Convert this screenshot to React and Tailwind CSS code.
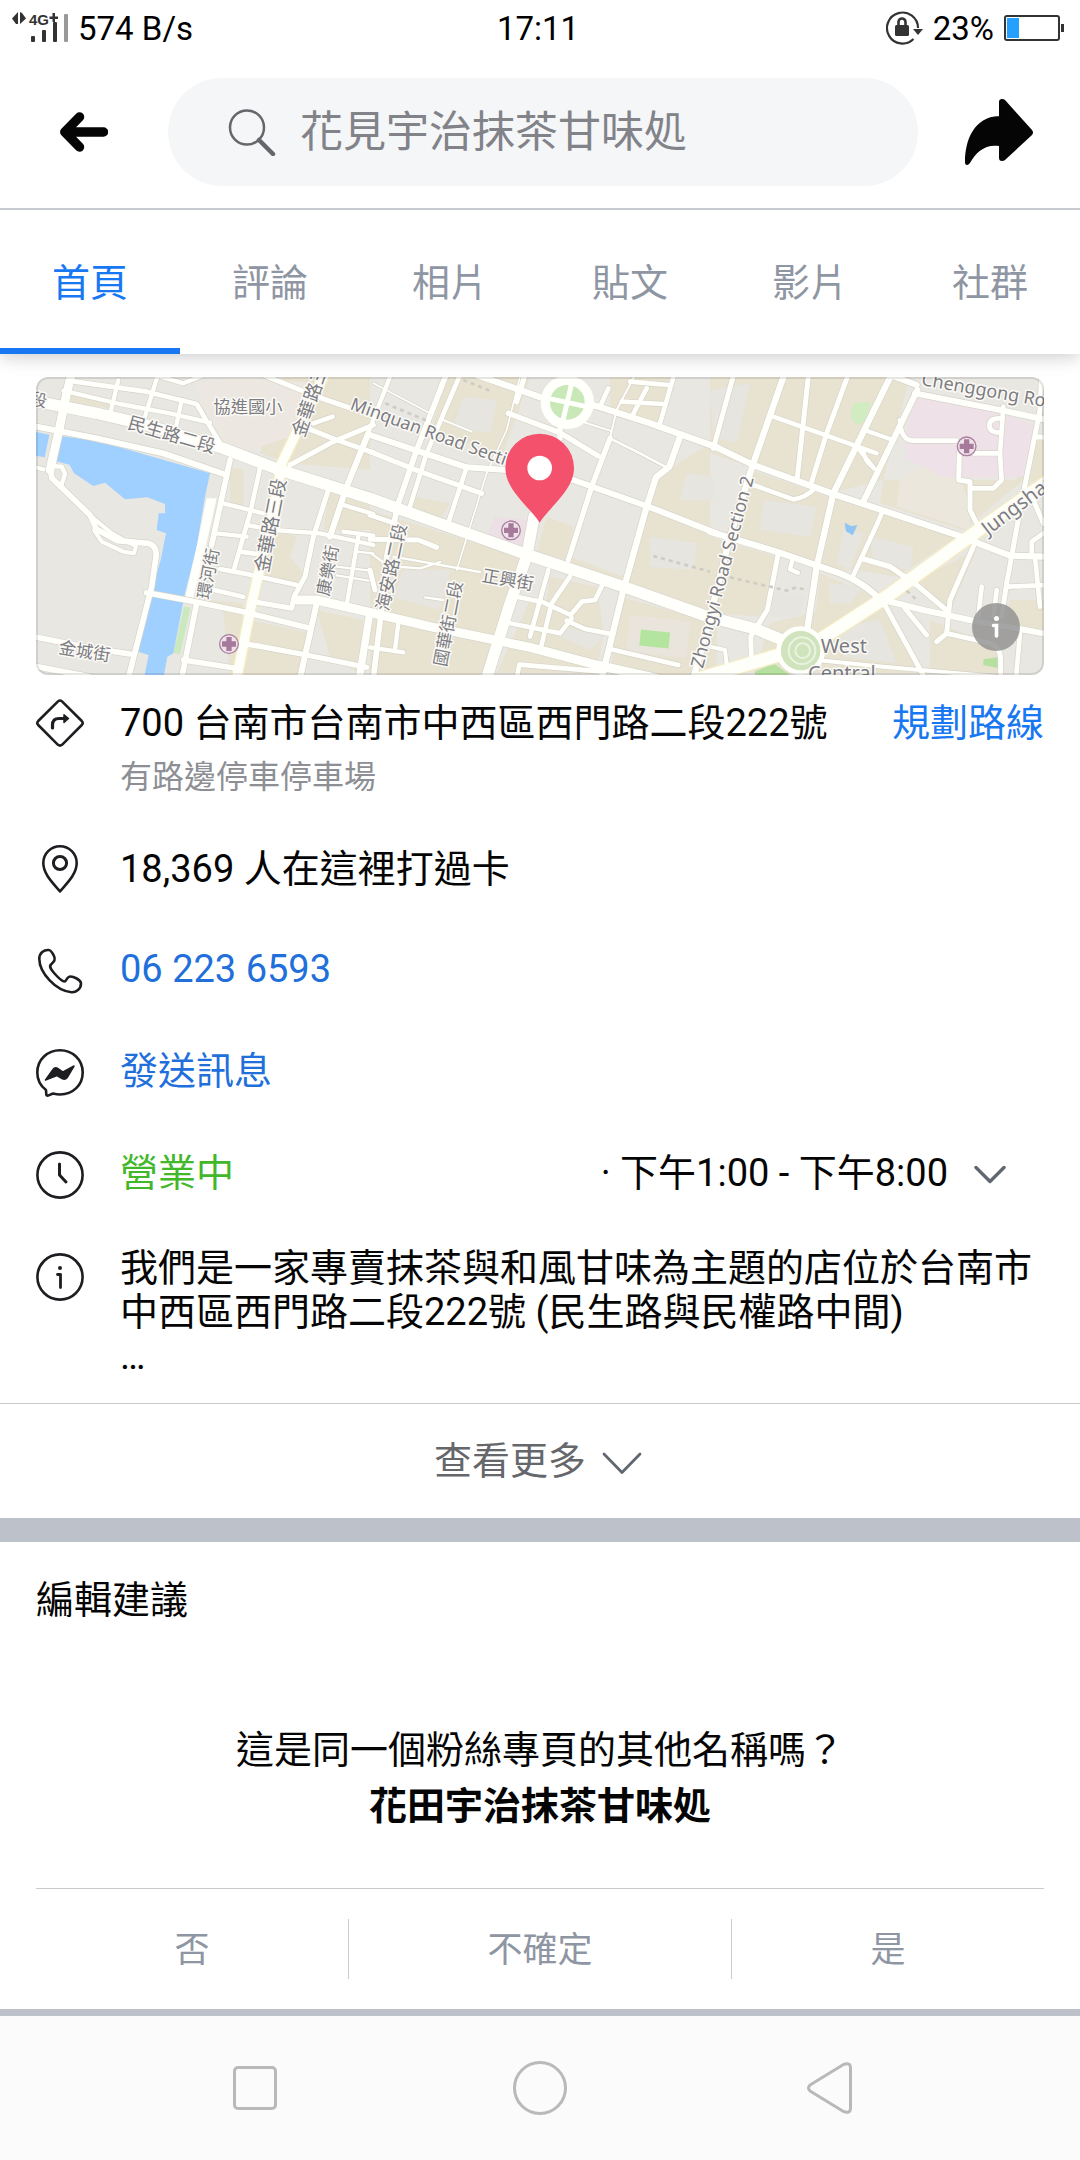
// App.jsx
const TABS = ["首頁", "評論", "相片", "貼文", "影片", "社群"];

// [path, stroke width] in the units of the map drawing
const ROADS = [
  // west side, along the canal
  ["M125 10L110 70L85 190L60 300", 26],
  ["M60 295L66 325L180 435L200 478L262 512L355 520Q382 528 378 560L365 650L295 925", 17],
  ["M185 440L245 490L285 512L318 528L312 550L280 545L215 515L192 480", 12],
  ["M10 290L40 298M60 288L95 290L105 312L92 352", 13],
  ["M10 168L200 205L400 250L590 315", 18],
  ["M135 35L350 65L500 102L522 140L580 235", 14],
  ["M100 62L270 102L420 130L540 158", 13],
  ["M385 10L345 140M265 30L242 125M455 90L438 170M385 18L460 40L515 18", 13],
  ["M600 270L545 525M500 700L455 925", 17],
  ["M690 295L660 430L610 605", 14],
  ["M895 360L850 500L825 620L792 680L785 715L680 697", 15],
  ["M1015 190L950 350L900 500M860 700L810 925", 18],
  ["M580 400L700 430M560 490L650 500M650 465L730 480L870 490L1030 525", 13],
  ["M630 545L680 552M570 597L640 610L800 645M530 655L640 680", 14],
  ["M350 668L480 692L640 725L840 775", 17],
  ["M640 820L830 855L1010 892M460 870L620 895", 16],
  ["M10 800L170 832L300 852M10 888L180 920", 17],
  ["M780 285L910 215L1030 165M840 178L920 210L1030 248M700 15L860 80L955 112", 15],
  ["M850 160L908 140", 14],
  ["M940 405L1030 432M940 485L1030 497M985 500L950 705", 13],
  ["M920 590L1020 602M920 616L1015 632M980 545L1030 550", 7],
  ["M1020 725L988 925", 22],
  // centre
  ["M1084 10L1010 200", 13],
  ["M1250 10L1160 240L1105 400L1070 560L1052 740L1030 925", 17],
  ["M1292 10L1190 250L1135 425", 14],
  ["M1020 195L1160 242L1310 292L1430 300L1630 330L1850 408L2060 490", 18],
  ["M1020 245L1170 305L1355 370", 15],
  ["M1340 15L1540 85L1700 108L1860 160L2060 232", 19],
  ["M1435 130L1590 188L1705 258M1485 15L1460 95M1590 150L1590 205", 16],
  ["M1815 15L1760 120L1740 205M1640 150L1740 182M1240 150L1325 185", 6],
  ["M1470 20L1430 180L1370 310L1280 600M1030 40L1200 130", 5],
  ["M1740 205L1685 350L1615 570", 16],
  ["M1950 200L1918 290L1878 322L1850 410L1780 660L1715 925", 19],
  ["M1932 15L1890 160M1800 35L1915 45M1775 95L1900 102M1850 55L1808 135M1735 55L1710 110", 14],
  ["M1740 205L1820 245L1905 290", 8],
  ["M1310 292L1255 458", 14],
  ["M1512 440L1490 560L1440 700L1370 925", 34],
  ["M1020 435L1100 462M1020 508L1165 510L1220 532M1020 600L1035 660", 15],
  ["M1020 548L1075 588L1170 595L1230 576M1090 560L1350 606M1185 682L1240 690", 7],
  ["M1555 600L1500 800M1620 620L1565 700L1532 835", 14],
  ["M1460 680L1540 697L1622 735L1655 695L1695 690L1715 650M1440 760L1590 790L1625 745M1610 752L1665 777L1735 790", 14],
  ["M1740 837L1945 885M1460 925L1468 884L1720 905", 14],
  ["M1020 832L1120 847M1105 760L1095 840", 13],
  // east side
  ["M2112 10L2050 235", 15],
  ["M2264 10L2170 280L2100 500L2030 780L1990 925", 19],
  ["M2336 10L2302 322M2456 10L2390 190L2345 335", 15],
  ["M2586 10L2410 370L2360 590L2330 790", 19],
  ["M2662 60L2500 395", 18],
  ["M2060 232L2170 285L2410 372L2780 495L2940 557L3050 560", 19],
  ["M2230 140L2540 250M2510 182L2580 207M2485 235L2532 295M2500 240Q2500 270 2532 295", 13],
  ["M2580 15L2660 45M2655 70L2920 122L3050 150", 18],
  ["M2920 110L2910 250L2915 330L2890 355L2820 355", 14],
  ["M2610 150Q2612 212 2650 212L2780 212M2830 250L2910 250M2910 145Q2878 145 2878 166Q2878 188 2910 188", 14],
  ["M2788 250L2786 330L2820 335L2820 420L2845 470", 15],
  ["M3035 10L3030 120L2970 420L2930 640L2915 740M3020 200L3050 202M3010 390L3040 460", 15],
  ["M2170 345L2290 388Q2325 385 2358 352", 14],
  ["M2040 485L2240 545L2400 600Q2500 630 2560 700", 19],
  ["M2555 430L2540 465L2468 620", 14],
  ["M2495 565L2580 590L2660 645L2755 725", 16],
  ["M2560 690L2680 720L2820 750L3050 792", 18],
  ["M2830 530L2760 690L2750 790L2720 815M2750 790L2860 815Q2912 820 2912 870L2912 925", 15],
  ["M2562 700L2685 925M2625 715L2690 795", 15],
  ["M2245 550L2212 720L2162 800L2165 890", 15],
  ["M2290 560L2280 598L2304 608", 13],
  ["M2970 790L2958 925M3015 560L3030 710M2935 650L3050 645M3005 560L3005 515L3040 490M2855 650L2845 740M2900 660L2890 740", 14],
  ["M2040 830L2085 840L2095 925M2360 870L2560 890L2900 920", 12],
  // main roads
  ["M10 92L200 130L350 165L580 235L750 300L1020 385L1200 450L1480 550L1780 650L2040 742L2180 778L2270 815", 34],
  ["M800 690L860 690L1020 727L1200 770L1500 832L1700 885L1880 925", 27],
];

const YELLOW_ROADS = [
  ["M885 10L755 280L735 400L665 700L620 925", 28],
  ["M3060 330L2860 470L2570 680L2330 835L2230 860L2010 925", 38],
];

const BEIGE = [
  "M760 21H1020V300L780 280L690 250Z",
  "M120 65L230 90L240 115L125 95ZM600 400L640 420L640 300L600 290Z",
  "M740 480L800 500L780 560L820 610L800 640L690 620ZM900 360L1020 390V480L880 480Z",
  "M540 690L640 700L620 910H600L580 730ZM660 750L840 790L820 915H640ZM860 720L1000 750L985 910L900 860Z",
  "M1250 21H1500L1420 250L1200 190ZM1150 380L1260 400L1230 450L1150 430ZM1020 420L1500 570L1380 915H1020Z",
  "M1550 440L1630 470L1610 570L1520 550ZM1740 21H1930L1890 160L1740 120ZM1620 560L1780 620L1770 660L1640 620ZM1560 620L1700 650L1720 780L1540 760Z",
  "M1500 690L1720 790L1700 910H1400ZM1880 320L2040 220L2040 720L1790 650ZM1770 680L2060 760V915H1740Z",
  "M2040 21H2640L2560 330L2400 370L2040 250ZM2160 300L2400 380L2360 590L2120 510Z",
  "M2420 380L2780 500L2600 620L2480 600L2370 600ZM2040 500L2240 560L2200 740L2040 730Z",
  "M2560 330H2980L2800 480L2550 400ZM2220 760L2460 700L2560 700L2680 910H2170ZM2370 610L2540 680L2350 800Z",
  "M2640 640L2840 540L2760 720ZM2700 750L2900 830V910H2700ZM2960 330L3042 340V200H2980ZM2940 690H3042V780H2930Z",
];

const GREY = [
  "M1300 80L1400 90L1380 190L1270 170ZM1120 600L1260 600L1230 720L1090 680Z",
  "M1860 500L2000 520L1990 600L1860 590ZM1600 770L1720 800L1680 840L1590 800ZM1970 310L2050 320V390H1950Z",
  "M2040 60L2160 40L2120 220L2050 200ZM2200 390L2360 410L2340 500L2190 480Z",
  "M2440 480L2500 490L2460 600L2420 580ZM2520 500L2650 530L2640 600L2530 580ZM2230 660L2320 680L2310 740L2220 740ZM2400 640L2500 650L2460 700L2400 700Z",
  "M2430 770L2550 750L2600 880L2440 860Z",
];

// [text, x, y, rotation, size]
const MAP_LABELS = [
  ["段", -2, 102, 12, 50],
  ["民生路二段", 290, 175, 16, 54],
  ["協進國小", 550, 130, 0, 52],
  ["金華路三段", 822, 205, -71, 56],
  ["金華路三段", 714, 610, -79, 57],
  ["環河街", 538, 690, -79, 51],
  ["康樂街", 896, 680, -79, 51],
  ["金城街", 84, 850, 9, 52],
  ["海安路二段", 1075, 725, -78, 53],
  ["國華街二段", 1248, 892, -79, 52],
  ["正興街", 1354, 634, 10, 52],
  ["Minquan Road Section", 958, 117, 20, 53],
  ["Zhongyi Road Section 2", 2018, 897, -75, 54],
  ["Chenggong Road", 2672, 45, 10, 54],
  ["Jungshan Road", 2874, 498, -37, 60],
  ["West", 2372, 850, 0, 60],
  ["Central", 2334, 930, 0, 60],
];

const HOSPITALS = [
  [597, 822],
  [1443, 481],
  [2810, 229],
];

const LocationMap = () => (
  <svg
    viewBox="18 21 3024 894"
    preserveAspectRatio="xMidYMid slice"
    className="block w-full h-[298px]"
    role="img"
    aria-label="地圖">
    <rect x="0" y="0" width="3060" height="940" fill="#e8e7e2" />
    {BEIGE.map((d) => (
      <path key={d} d={d} fill="#e8e2d1" />
    ))}
    {GREY.map((d) => (
      <path key={d} d={d} fill="#e6e5e0" />
    ))}
    <path d="M490 40L640 21L850 40L780 200L660 240L600 240L540 150Z" fill="#ece8e1" />
    <path d="M2610 320L2680 290L2790 330L2820 400L2820 480L2600 410Z" fill="#ece7dd" />
    <path d="M2650 80L2910 130L3020 165L2985 320L2740 322L2680 290L2630 270L2625 215Z" fill="#eee1e8" />
    <path d="M1395 440L1490 450L1475 535L1370 500Z" fill="#ecdfe5" />
    <rect x="1795" y="745" width="180" height="110" fill="#e9e5dc" transform="rotate(6 1885 800)" />
    <rect x="1830" y="783" width="88" height="48" fill="#b4e59e" transform="rotate(6 1875 808)" />
    <path d="M2470 100L2520 95L2512 150L2480 165L2462 140Z" fill="#d0ecc0" />
    <path d="M2860 868L2902 862L2905 895L2860 885ZM2175 905L2230 880L2280 915H2175Z" fill="#b6e0a0" />
    <path d="M462 710L482 712L450 852L430 850Z" fill="#cbe9bf" />
    <path d="M2444 458L2463 468L2482 466L2468 496L2448 484Z" fill="#8fc4f5" />
    {/* Canal */}
    <path
      fill="#9fd0ff"
      d="M90 198L200 212L420 275L540 310L525 380L500 530L465 670L455 720L430 850L412 860L400 925H342L356 855L325 845L365 665L392 570L408 490L380 480L386 430L405 430L405 402L352 382L285 388L225 338L190 348L132 310L118 284L80 274ZM10 184L58 194L44 262L10 256Z"
    />
    <path d="M530 385L560 385L520 560L488 690L466 680L500 530Z" fill="#fffffc" />

    <g fill="none" strokeLinecap="round" strokeLinejoin="round">
      {ROADS.map(([d, w]) => (
        <path key={d} d={d} stroke="#d6d4ca" strokeWidth={w + 4} />
      ))}
      {YELLOW_ROADS.map(([d, w]) => (
        <path key={d} d={d} stroke="#f3ecc2" strokeWidth={w + 8} />
      ))}
      {ROADS.map(([d, w]) => (
        <path key={d} d={d} stroke="#fffffc" strokeWidth={w} />
      ))}
      {YELLOW_ROADS.map(([d, w]) => (
        <path key={d} d={d} stroke="#fffffa" strokeWidth={w} />
      ))}
      <path
        d="M1300 30L1380 62M1066 100L1190 152M1870 558L2040 605M2100 622L2220 650L2270 662L2300 652L2330 660M2630 662L2660 690"
        stroke="#cfccc3"
        strokeWidth="8"
        strokeDasharray="12 12"
        strokeLinecap="butt"
      />
    </g>

    {/* Roundabouts */}
    <circle cx="1612" cy="97" r="66" fill="#c8e8b8" stroke="#fffffc" strokeWidth="28" />
    <path d="M1555 85L1670 110M1625 40L1598 155" stroke="#fffffc" strokeWidth="15" />
    <circle cx="2312" cy="842" r="66" fill="#cfe3bd" stroke="#fffffc" strokeWidth="14" />
    <circle cx="2316" cy="842" r="40" fill="none" stroke="#eaf3df" strokeWidth="6" />
    <circle cx="2318" cy="842" r="22" fill="none" stroke="#eaf3df" strokeWidth="6" />

    {HOSPITALS.map(([x, y]) => (
      <g key={x}>
        <circle cx={x} cy={y} r="28" fill="#efe3ea" stroke="#ab7f9f" strokeWidth="4" />
        <path
          d={`M${x - 21} ${y}H${x + 21}M${x} ${y - 21}V${y + 21}`}
          stroke="#a57a9a"
          strokeWidth="16"
        />
      </g>
    ))}

    {MAP_LABELS.map(([label, x, y, angle, size]) => (
      <text
        key={label + x}
        transform={`translate(${x} ${y}) rotate(${angle})`}
        fontSize={size}
        fill="#7c7c82"
        stroke="#fbfaf6"
        strokeWidth="9"
        strokeLinejoin="round"
        paintOrder="stroke"
        className="font-['Noto_Sans','Noto_Sans_CJK_TC',sans-serif]">
        {label}
      </text>
    ))}

    {/* Pin */}
    <path
      fill="#f4516c"
      d="M1529 458C1500 412 1426 360 1426 294A103 103 0 0 1 1632 294C1632 360 1558 412 1529 458Z"
    />
    <circle cx="1529" cy="294" r="37" fill="#fff" />
  </svg>
);

const StatusBar = () => (
  <div className="grid grid-cols-3 items-center h-14 pl-3 pr-4 text-[33px] leading-none text-black">
    <div className="flex items-center gap-2.5">
      <svg width="56" height="32" viewBox="12 11 56 32" fill="#333">
        <path d="M18 11V23H16L12 17.500ZM20 11V23L26 17.500L22 12Z" />
        <text x="29" y="24" fontSize="15" fontWeight="bold" className="font-['Liberation_Sans',sans-serif]">
          4G
        </text>
        <path d="M49.500 15.500H58V18H49.500ZM52.500 12H55V21H52.500Z" />
        <rect x="31" y="35" width="4" height="6" rx="1" />
        <rect x="42" y="29" width="4" height="12" rx="1" />
        <rect x="53" y="21" width="4" height="20" rx="1" />
        <rect x="64" y="13" width="4" height="28" rx="1" fill="#999" />
      </svg>
      <span>574 B/s</span>
    </div>
    <div className="text-center">17:11</div>
    <div className="flex items-center justify-end gap-2.5">
      <svg width="37" height="34" viewBox="884 10 37 34" fill="none">
        <path d="M916 27A15.500 15.500 0 1 0 911.500 38" stroke="#333" strokeWidth="2.200" />
        <path d="M911 28H921L916 34Z" fill="#333" />
        <rect x="893" y="24" width="14" height="11" rx="1.500" fill="#333" />
        <path d="M896.500 25V21A3.500 3.500 0 0 1 903.500 21V25" stroke="#333" strokeWidth="2.600" />
      </svg>
      <span>23%</span>
      <svg width="60" height="28" viewBox="1004 13 60 28">
        <rect x="1005" y="15" width="54" height="24" rx="2" fill="none" stroke="#333" strokeWidth="2" />
        <rect x="1007" y="17" width="12" height="20" fill="#24a0ff" />
        <rect x="1061" y="23" width="3" height="8" fill="#333" />
      </svg>
    </div>
  </div>
);

const Header = () => (
  <header className="relative z-10 flex items-center py-[22px] border-b-2 border-[#c8ccd1] bg-white">
    <button aria-label="返回" className="flex justify-center w-42">
      <svg width="48" height="40" viewBox="0 0 48 40" fill="none" stroke="#050505" strokeWidth="9.500" strokeLinecap="round" strokeLinejoin="round">
        <path d="M43.500 20H6M19.500 5L4.800 20L19.500 35" />
      </svg>
    </button>
    <label className="flex items-center flex-1 gap-6 h-27 px-15 rounded-full bg-[#f5f6f8]">
      <svg width="48" height="48" viewBox="0 0 48 48" fill="none" stroke="#65676b" strokeLinecap="round" className="shrink-0">
        <circle cx="19" cy="19.500" r="17" strokeWidth="2.500" />
        <path d="M31 32L45 46" strokeWidth="4.500" />
      </svg>
      <input
        type="text"
        aria-label="搜尋"
        placeholder="花見宇治抹茶甘味処"
        className="w-full min-w-0 bg-transparent text-[43px] leading-[60px] outline-none placeholder:text-[#828388]"
      />
    </label>
    <button aria-label="分享" className="flex justify-center w-[162px]">
      <svg width="70" height="68" viewBox="964 98 70 68" fill="#050505">
        <path d="M999 120V102Q999 99 1002 99Q1004 99 1005 100L1032 130Q1034 132.500 1032 135L1005 160Q1004 161 1002 161Q999 161 999 158V146C985 144 976 152 970 163Q968.500 165 967 165Q965 165 965 162C965 140 974 117 999 116Z" />
      </svg>
    </button>
  </header>
);

const Tabs = () => (
  <nav className="grid grid-cols-6 h-36 shadow-[0_2px_18px_rgba(0,0,0,0.22)]">
    {TABS.map((tab, i) => (
      <a
        key={tab}
        href="#"
        className={`flex items-center justify-center pt-2 border-b-6 ${
          i === 0
            ? "text-[#1877f2] border-[#1877f2]"
            : "text-[#8f96a3] border-transparent"
        }`}>
        {tab}
      </a>
    ))}
  </nav>
);

const RowIcon = ({ children }) => (
  <svg
    width="48"
    height="48"
    viewBox="0 0 48 48"
    fill="none"
    stroke="#1c1e21"
    strokeWidth="2.600"
    strokeLinecap="round"
    strokeLinejoin="round"
    className="shrink-0">
    {children}
  </svg>
);

const PageInfo = () => (
  <section className="px-9 pt-[23px] pb-[25px]">
    <div className="relative overflow-hidden rounded-xl">
      <LocationMap />
      <div className="absolute inset-0 rounded-xl border-2 border-black/10"></div>
      <button
        aria-label="地圖資訊"
        className="absolute right-6 bottom-6 flex items-center justify-center w-12 h-12 rounded-full bg-[#8f8f8f]/80">
        <svg width="24" height="24" viewBox="0 0 24 24" fill="none" stroke="#fff" strokeWidth="3.600" strokeLinecap="round">
          <path d="M9.500 10.500H12.500V21" />
          <path d="M12.500 3.500V3.600" strokeWidth="5" />
        </svg>
      </button>
    </div>

    <div className="flex gap-9 mt-6">
      <RowIcon>
        <path d="M22 2.400Q24 0.600 26 2.400L45.800 22Q47.600 24 45.800 26L26 45.800Q24 47.400 22 45.800L2.200 26Q0.400 24 2.200 22Z" />
        <path d="M16.500 29V26Q16.500 19.500 23 19.500H29" strokeWidth="3.200" />
        <path d="M28 15.800L32.500 19.500L28 23.500Z" fill="#1c1e21" strokeWidth="1.500" />
      </RowIcon>
      <div className="flex-1">
        <div className="flex justify-between leading-12">
          <span>700 台南市台南市中西區西門路二段222號</span>
          <a href="#" className="text-[#1877f2]">
            規劃路線
          </a>
        </div>
        <p className="mt-2 text-[32px] leading-11 text-[#8d8f94]">
          有路邊停車停車場
        </p>
      </div>
    </div>

    <div className="flex gap-9 mt-[46px]">
      <RowIcon>
        <path d="M24 46.400C19 40 7.300 30 7.300 18A16.700 16.700 0 0 1 40.700 18C40.700 30 29 40 24 46.400Z" />
        <circle cx="24" cy="18" r="6.600" strokeWidth="3" />
      </RowIcon>
      <span className="leading-12">18,369 人在這裡打過卡</span>
    </div>

    <div className="flex flex-col gap-[54px] mt-[54px]">
      <div className="flex gap-9">
        <RowIcon>
          <path d="M12.800 3C15 3 16.500 6 18 9C20 13.500 17.500 15 15 17.500C13 19.500 14.500 22 18.500 26.500C22.500 31 26.500 34.500 28.500 34.500C30.500 34.500 30.500 29.500 34.500 29.500C37 29.500 45 32.500 45 36.500C45 42 40 45.500 35.500 45.200C20 44 3.500 26 3.300 12C3.300 6 8 2.600 12.800 3Z" />
        </RowIcon>
        <a href="tel:062236593" className="leading-11 text-[#216fdb]">
          06 223 6593
        </a>
      </div>
      <div className="flex gap-9">
        <RowIcon>
          <path d="M10 41C4 36.500 1.300 30 1.300 23.500C1.300 10.500 11.500 1.300 24 1.300C36.500 1.300 46.700 10.500 46.700 23.500C46.700 36 37 45.500 24 45.500C21.500 45.500 19 45 17 44.500L12 46.600Q10.400 47 10.300 45.500Z" />
          <path
            d="M9.500 31L17 20.500Q19 17.500 22 19.500L27 23L38 17L31.500 28Q29.500 31.500 26 29.500L21 26.500Z"
            fill="#1c1e21"
            strokeWidth="1.500"
          />
        </RowIcon>
        <a href="#" className="leading-11 text-[#216fdb]">
          發送訊息
        </a>
      </div>
      <div className="flex gap-9">
        <RowIcon>
          <circle cx="24" cy="24" r="22.600" />
          <path d="M23.500 13V24L30 31" strokeWidth="3" />
        </RowIcon>
        <button className="flex items-start flex-1 leading-11">
          <span className="text-[#42b72a]">營業中</span>
          <span className="ml-auto">· 下午1:00 - 下午8:00</span>
          <svg width="32" height="44" viewBox="0 0 32 44" fill="none" stroke="#606770" strokeWidth="3.400" strokeLinecap="round" strokeLinejoin="round" className="ml-[26px] mr-[38px]">
            <path d="M2 16.500L16 30.500L30 16.500" />
          </svg>
        </button>
      </div>
    </div>

    <div className="flex gap-9 mt-[47px]">
      <div className="pt-[7px]">
        <RowIcon>
          <circle cx="24" cy="24" r="22.600" />
          <path d="M21.500 21.500H24.500V34.500" strokeWidth="2.800" />
          <path d="M24 15V15.100" strokeWidth="4" />
        </RowIcon>
      </div>
      <p className="flex-1 leading-11">
        我們是一家專賣抹茶與和風甘味為主題的店位於台南市中西區西門路二段222號
        (民生路與民權路中間)
        <br />…
      </p>
    </div>
  </section>
);

const Suggestion = () => (
  <section className="px-9 pt-[34px]">
    <h2 className="leading-12">編輯建議</h2>
    <div className="mt-[98px] text-center leading-14">
      <p>這是同一個粉絲專頁的其他名稱嗎？</p>
      <p className="font-bold">花田宇治抹茶甘味処</p>
    </div>
    <div className="flex items-center h-[121px] mt-[54px] border-t border-[#c9cacd] text-[35px] text-[#8f96a3]">
      <button className="flex-auto h-15 pt-1">否</button>
      <button className="flex-auto h-15 pt-1 border-x border-[#c9cacd]">
        不確定
      </button>
      <button className="flex-auto h-15 pt-1">是</button>
    </div>
  </section>
);

const SystemNav = () => (
  <div className="flex items-center justify-center gap-[236px] h-36 pl-1 bg-[#fbfbfb]">
    <button aria-label="最近" className="w-11 h-11 rounded-[5px] border-3 border-[#b9b9b9]"></button>
    <button aria-label="主畫面" className="w-[54px] h-[54px] rounded-full border-3 border-[#b9b9b9]"></button>
    <button aria-label="上一頁" className="pl-1">
      <svg width="45" height="52" viewBox="0 0 45 52" fill="none" stroke="#b9b9b9" strokeWidth="3" strokeLinejoin="round">
        <path d="M3 23L36.500 2.500Q43.500 0 43.500 6V46Q43.500 52 36.500 49.500L3 29Q0 26 3 23Z" />
      </svg>
    </button>
  </div>
);

const App = () => {
  return (
    <div
      lang="zh-Hant"
      className="min-h-screen bg-white text-[38px] text-[#050505] font-['Roboto','Noto_Sans_CJK_TC',sans-serif]">
      <StatusBar />
      <Header />
      <Tabs />
      <PageInfo />
      <button className="flex items-center justify-center gap-4 w-full h-[115px] pr-1 border-t border-[#c9cacd] text-[#65676b]">
        查看更多
        <svg width="40" height="24" viewBox="0 0 40 24" fill="none" stroke="#606770" strokeWidth="2.800" strokeLinecap="round" strokeLinejoin="round" className="mt-1">
          <path d="M2 3L20 21.500L38 3" />
        </svg>
      </button>
      <div className="h-6 bg-[#bdc1ca]"></div>
      <Suggestion />
      <div className="h-[7px] bg-[#bdc1ca]"></div>
      <SystemNav />
    </div>
  );
};

export default App;
